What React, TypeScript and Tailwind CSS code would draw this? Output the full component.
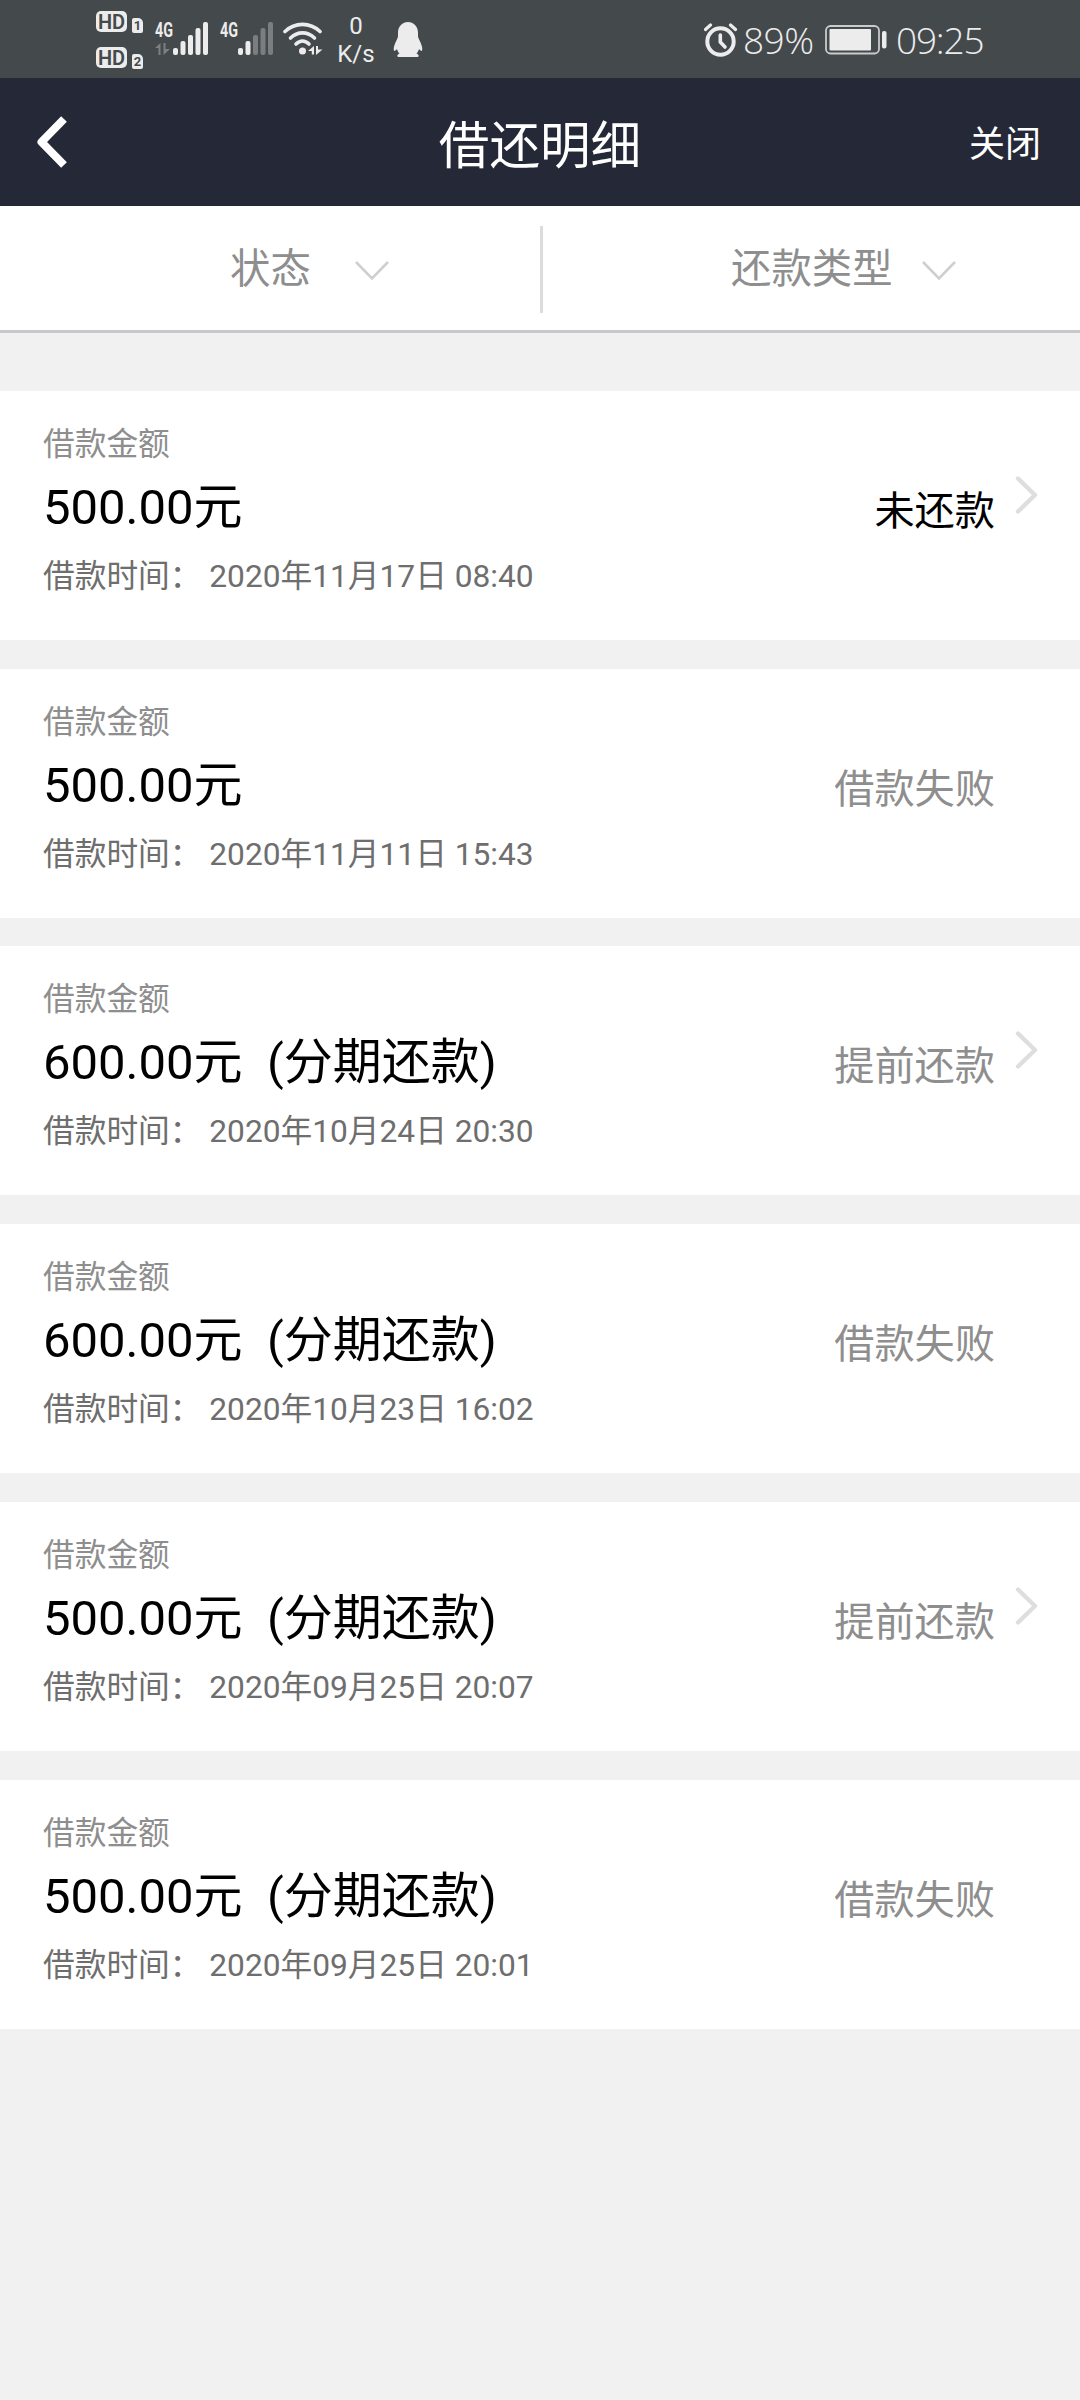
import clsx from "clsx";

// ─── Data ────────────────────────────────────────────────────────────────────

interface Loan {
  id: number;
  amount: string;
  installment: boolean;
  time: string;
  status: string;
  active?: boolean;
  hasDetail: boolean;
}

const LOANS: Loan[] = [
  { id: 1, amount: "500.00元", installment: false, time: "2020年11月17日 08:40", status: "未还款", active: true, hasDetail: true },
  { id: 2, amount: "500.00元", installment: false, time: "2020年11月11日 15:43", status: "借款失败", hasDetail: false },
  { id: 3, amount: "600.00元", installment: true, time: "2020年10月24日 20:30", status: "提前还款", hasDetail: true },
  { id: 4, amount: "600.00元", installment: true, time: "2020年10月23日 16:02", status: "借款失败", hasDetail: false },
  { id: 5, amount: "500.00元", installment: true, time: "2020年09月25日 20:07", status: "提前还款", hasDetail: true },
  { id: 6, amount: "500.00元", installment: true, time: "2020年09月25日 20:01", status: "借款失败", hasDetail: false },
];

// ─── Status bar ──────────────────────────────────────────────────────────────

function HdBadge({ sim }: { sim: number }) {
  return (
    <div className="flex h-[22px] items-start gap-[5px]">
      <span className="flex h-[21px] w-[31px] items-center justify-center rounded-[5px] bg-[#ececec] font-['Roboto'] text-[20px] leading-none font-semibold text-[#44494c]">
        HD
      </span>
      <span className="mt-[7px] flex h-[15px] w-[11px] items-center justify-center rounded-[2px] rounded-tr-[5px] bg-[#ececec] font-['Roboto'] text-[13px] leading-none font-bold text-[#44494c]">
        {sim}
      </span>
    </div>
  );
}

const BARS = [
  { x: 18, y: 26 },
  { x: 25.5, y: 19 },
  { x: 33, y: 13 },
  { x: 40.5, y: 6 },
  { x: 48, y: 0 },
];

function Signal({ level, data }: { level: number; data?: boolean }) {
  return (
    <svg className="h-[44px] w-[53px] shrink-0" viewBox="0 -10 53 44">
      <text x="0" y="15" fontSize="20" fontWeight="700" fontFamily="Roboto" fill="#ececec" textLength="18" lengthAdjust="spacingAndGlyphs">
        4G
      </text>
      {data && <path d="M0 26 L5.5 21 V33 H3.5 V26Z M8.5 21 H10.5 V27 H15 L8.5 33Z" fill="#7d8082" />}
      {BARS.map((b, i) => (
        <rect key={b.x} x={b.x} y={b.y} width="5" height={33 - b.y} rx="2" fill={i < level ? "#ececec" : "#7b7e80"} />
      ))}
    </svg>
  );
}

function WifiIcon() {
  return (
    <svg className="h-[34px] w-[40px] shrink-0" viewBox="0 0 40 34" fill="none" stroke="#ececec" strokeWidth="3.6" strokeLinecap="round">
      <path d="M2 9.5 C12 0 27 0 37 9.5" />
      <path d="M7.5 16 C14.5 9.2 24.5 9.2 31.5 16" />
      <path d="M13 22 C17 18 22 18 26 22" />
      <circle cx="19.5" cy="29" r="3.5" fill="#ececec" stroke="none" />
      <path d="M25 29 L31 24 V32.5 H28.8 V29Z M33 24 H35 V27.5 H39.5 L33 33Z" fill="#ececec" stroke="none" />
    </svg>
  );
}

function QQIcon() {
  return (
    <svg className="h-[36px] w-[30px] shrink-0" viewBox="0 0 30 36" fill="#ececec">
      <path d="M15 0 C20.5 0 25 4.5 25 10.5 V14 C25 16 26.5 18 27.5 20.5 C29 24 29.8 27 29 28.6 C28.4 29.4 27.2 28.4 26 27 C25.6 28.8 24.6 30.4 23.4 31.6 C25 32.4 26 33.2 25.6 34.2 C25.2 35.2 23 35 19.5 35 H10 C7 35 4.8 35.2 4.4 34.2 C4 33.2 5 32.4 6.6 31.6 C5.4 30.4 4.4 28.8 4 27 C2.8 28.4 1.6 29.4 1 28.6 C0.2 27 1 24 2.5 20.5 C3.5 18 5 16 5 14 V10.5 C5 4.5 9.5 0 15 0Z" />
    </svg>
  );
}

function AlarmIcon() {
  return (
    <svg className="h-[34px] w-[34px] shrink-0" viewBox="0 0 34 34" fill="none" stroke="#ececec" strokeLinecap="round">
      <circle cx="16.5" cy="18.5" r="13.2" strokeWidth="4" />
      <path d="M1.5 6.5 L6.5 2 M31.5 6.5 L26.5 2" strokeWidth="3.2" />
      <path d="M16.3 12 V19 L21 24" strokeWidth="3.6" />
    </svg>
  );
}

function BatteryIcon() {
  return (
    <svg className="h-[30px] w-[62px] shrink-0" viewBox="0 0 62 30">
      <rect x="1" y="1" width="53" height="27.5" rx="4.5" fill="none" stroke="#c9cbcc" strokeWidth="1.8" />
      <rect x="4.5" y="4" width="41.5" height="21.5" rx="1" fill="#ececec" />
      <rect x="57" y="6" width="4.5" height="17.5" rx="2" fill="#ececec" />
    </svg>
  );
}

function StatusBar() {
  return (
    <div className="flex h-[78px] items-start bg-[#44494c] text-[#ececec]">
      <div className="mt-[11px] ml-24 flex w-[47px] flex-col gap-[14px]">
        <HdBadge sim={1} />
        <HdBadge sim={2} />
      </div>
      <div className="mt-[12px] ml-[12px] flex gap-3">
        <Signal level={5} data />
        <Signal level={2} />
      </div>
      <div className="mt-[22px] ml-[10px]">
        <WifiIcon />
      </div>
      <div className="mt-[12px] ml-[11px] w-[44px] text-center font-['Roboto'] text-[24px] leading-[28px]">
        <div>0</div>
        <div>K/s</div>
      </div>
      <div className="mt-[22px] ml-[15px]">
        <QQIcon />
      </div>
      <div className="mt-[23px] ml-auto">
        <AlarmIcon />
      </div>
      <span className="mt-[15px] ml-[5px] w-[74px] font-['Open_Sans'] text-[37px] leading-[50px] font-light tracking-[-0.5px]">89%</span>
      <div className="mt-[25px] ml-[8px]">
        <BatteryIcon />
      </div>
      <span className="mt-[15px] mr-[93px] ml-[9px] w-[91px] font-['Open_Sans'] text-[37px] leading-[50px] font-light tracking-[-1.2px]">09:25</span>
    </div>
  );
}

// ─── Header & filters ────────────────────────────────────────────────────────

function Header() {
  return (
    <header className="grid h-32 grid-cols-3 items-center bg-[#252836] text-white">
      <svg className="ml-[34px] h-[56px] w-[36px]" viewBox="0 0 36 56" fill="none" stroke="#fff" strokeWidth="8" strokeLinejoin="round" strokeLinecap="butt">
        <path d="M30 5 L7.5 28 L30 51" />
      </svg>
      <h1 className="pt-[9px] text-center text-[50.6px] leading-[60px]">借还明细</h1>
      <button className="mr-[39px] justify-self-end pt-[6px] text-[36px] leading-[48px]">关闭</button>
    </header>
  );
}

function ChevronDown() {
  return (
    <svg className="mt-[6px] h-[20px] w-[34px]" viewBox="0 0 34 20" fill="none" stroke="#cfcfcf" strokeWidth="2.6">
      <path d="M1 1 L17 17.5 L33 1" />
    </svg>
  );
}

function FilterBar() {
  return (
    <div className="flex h-[127px] border-b-[3px] border-[#c8c7cc] bg-white text-[40.4px] leading-[56px] text-[#8e8e8e]">
      <button className="flex w-[540px] items-center pl-[230px]">
        <span className="w-[125px] pt-1 text-left">状态</span>
        <ChevronDown />
      </button>
      <div className="mt-5 h-[87px] w-[3px] bg-[#dcdcdc]" />
      <button className="flex flex-1 items-center pl-[188px]">
        <span className="w-[191px] pt-1 text-left">还款类型</span>
        <ChevronDown />
      </button>
    </div>
  );
}

// ─── Loan card ───────────────────────────────────────────────────────────────

function LoanCard({ loan }: { loan: Loan }) {
  return (
    <li className="flex h-[249px] bg-white pl-[43px]">
      <div className="flex-1 pt-[34px]">
        <p className="text-[31.7px] leading-10 text-[#8e8e8e]">借款金额</p>
        <p className="mt-[15px] text-[49px] leading-[56px] whitespace-pre text-black">
          {loan.amount}
          {loan.installment && "  (分期还款)"}
        </p>
        <p className="mt-[21px] text-[31.7px] leading-10 whitespace-pre text-[#6e6e6e]">借款时间： {loan.time}</p>
      </div>
      <span className={clsx("mt-[93px] text-[40.2px] leading-[56px]", loan.active ? "text-black" : "text-[#8e8e8e]")}>
        {loan.status}
      </span>
      <div className="mt-[84px] w-[85px] pl-5">
        {loan.hasDetail && (
          <svg className="h-[40px] w-[24px]" viewBox="0 0 24 40" fill="none" stroke="#dedede" strokeWidth="4.4" strokeLinecap="round" strokeLinejoin="round">
            <path d="M3 3.5 L20 20 L3 36.5" />
          </svg>
        )}
      </div>
    </li>
  );
}

// ─── Page ────────────────────────────────────────────────────────────────────

export default function App() {
  return (
    <div className="h-[2400px] w-[1080px] overflow-hidden bg-[#f1f1f1] font-['Roboto','Noto_Sans_CJK_SC',sans-serif]">
      <StatusBar />
      <Header />
      <FilterBar />
      <ul className="mt-[58px] flex flex-col gap-[28.72px]">
        {LOANS.map((loan) => (
          <LoanCard key={loan.id} loan={loan} />
        ))}
      </ul>
    </div>
  );
}
